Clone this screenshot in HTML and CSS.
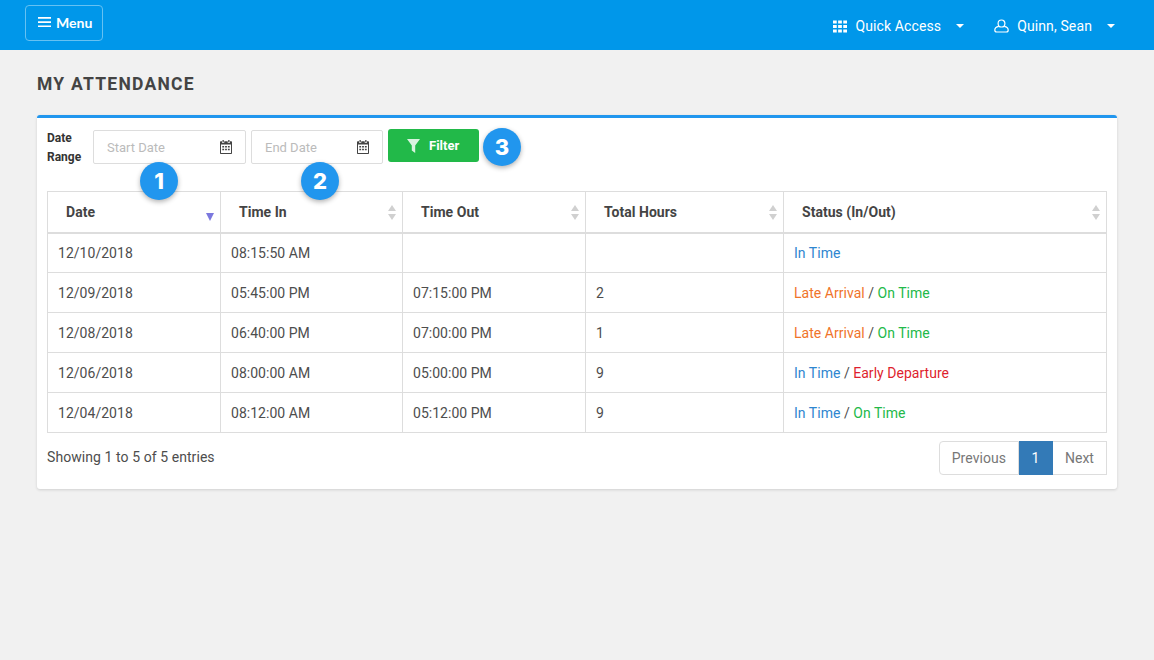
FILE: index.html
```html
<!doctype html>
<html>
  <head>
    <title>My Attendance</title>
    <meta name="viewport" content="width=device-width, initial-scale=1">
    <link rel="stylesheet" href="styles.css">
  </head>
  <body>
    <header class="navbar">
      <button class="menu-btn">
        <svg class="menu-icon" width="13" height="12" viewBox="0 0 13 12"><path d="M0 1h13v1.7H0zM0 5.200h13v1.700H0zM0 9.400h13v1.700H0z" fill="#fff"/></svg>
        Menu
      </button>
      <nav class="nav-right">
        <a class="nav-link nav-quick">
          <svg width="14" height="13" viewBox="0 0 15 13" fill="#fff"><path d="M0 0h4v3.400H0zM5.500 0h4v3.400h-4zM11 0h4v3.400h-4zM0 4.800h4v3.400H0zM5.500 4.800h4v3.400h-4zM11 4.800h4v3.400h-4zM0 9.600h4V13H0zM5.500 9.600h4V13h-4zM11 9.600h4V13h-4z"/></svg>
          <span>Quick Access</span>
          <i class="caret"></i>
        </a>
        <a class="nav-link nav-user">
          <svg width="15" height="14" viewBox="0 0 15 14" fill="none" stroke="#fff" stroke-width="1.2"><path d="M7.500 1c-2 0-3.400 1.500-3.400 3.400S5.500 8 7.500 8s3.400-1.700 3.400-3.600S9.500 1 7.500 1z"/><path d="M4.800 7.400C2.500 7.800.8 9 .8 11c0 1.200.7 2 1.900 2h9.600c1.200 0 1.900-.8 1.900-2 0-2-1.700-3.200-4-3.600"/></svg>
          <span>Quinn, Sean</span>
          <i class="caret"></i>
        </a>
      </nav>
    </header>

    <main class="content">
      <h1 class="page-title">MY ATTENDANCE</h1>

      <section class="card">
        <form class="filter-row">
          <label class="filter-label">Date<br>Range</label>
          <div class="date-input date-start">
            <span>Start Date</span>
            <svg class="cal-icon" width="12" height="14" viewBox="0 0 12 14"><path fill="#444" d="M2.500 0h1.300v2H2.500zM8.200 0h1.300v2H8.200zM1 1.300h1v1.500h2.300V1.300h3.400v1.500H10V1.300h1c.6 0 1 .4 1 1V13c0 .6-.4 1-1 1H1c-.6 0-1-.4-1-1V2.300c0-.6.4-1 1-1zM1 4.600V13h10V4.600z"/><path fill="#444" d="M2.300 6h1.800v1.500H2.300zM5.100 6h1.800v1.500H5.100zM7.900 6h1.800v1.500H7.900zM2.300 8.800h1.800v1.500H2.300zM5.100 8.800h1.800v1.500H5.100zM7.900 8.800h1.800v1.500H7.900z"/></svg>
          </div>
          <div class="date-input date-end">
            <span>End Date</span>
            <svg class="cal-icon" width="12" height="14" viewBox="0 0 12 14"><path fill="#444" d="M2.500 0h1.300v2H2.500zM8.200 0h1.300v2H8.200zM1 1.300h1v1.500h2.300V1.300h3.400v1.500H10V1.300h1c.6 0 1 .4 1 1V13c0 .6-.4 1-1 1H1c-.6 0-1-.4-1-1V2.300c0-.6.4-1 1-1zM1 4.600V13h10V4.600z"/><path fill="#444" d="M2.300 6h1.800v1.500H2.300zM5.100 6h1.800v1.500H5.100zM7.900 6h1.800v1.500H7.900zM2.300 8.800h1.800v1.500H2.300zM5.100 8.800h1.800v1.500H5.100zM7.900 8.800h1.800v1.500H7.900z"/></svg>
          </div>
          <button type="button" class="filter-btn">
            <svg width="13" height="14" viewBox="0 0 13 14"><path fill="#d8f3df" d="M0 0h13L8.200 6.500V14L4.800 11.500v-5z"/></svg>
            Filter
          </button>
        </form>

        <table class="data-table">
          <thead>
            <tr>
              <th class="col-date sorted">Date<i class="sort-desc"></i></th>
              <th class="col-in">Time In<i class="sort"></i></th>
              <th class="col-out">Time Out<i class="sort"></i></th>
              <th class="col-total">Total Hours<i class="sort"></i></th>
              <th class="col-status">Status (In/Out)<i class="sort"></i></th>
            </tr>
          </thead>
          <tbody>
            <tr><td>12/10/2018</td><td>08:15:50 AM</td><td></td><td></td><td><span class="blue">In Time</span></td></tr>
            <tr><td>12/09/2018</td><td>05:45:00 PM</td><td>07:15:00 PM</td><td>2</td><td><span class="orange">Late Arrival</span> / <span class="green">On Time</span></td></tr>
            <tr><td>12/08/2018</td><td>06:40:00 PM</td><td>07:00:00 PM</td><td>1</td><td><span class="orange">Late Arrival</span> / <span class="green">On Time</span></td></tr>
            <tr><td>12/06/2018</td><td>08:00:00 AM</td><td>05:00:00 PM</td><td>9</td><td><span class="blue">In Time</span> / <span class="red">Early Departure</span></td></tr>
            <tr><td>12/04/2018</td><td>08:12:00 AM</td><td>05:12:00 PM</td><td>9</td><td><span class="blue">In Time</span> / <span class="green">On Time</span></td></tr>
          </tbody>
        </table>

        <div class="table-footer">
          <div class="table-info">Showing 1 to 5 of 5 entries</div>
          <ul class="pagination">
            <li>Previous</li>
            <li class="active">1</li>
            <li>Next</li>
          </ul>
        </div>

        <span class="badge badge-1">1</span>
        <span class="badge badge-2">2</span>
        <span class="badge badge-3">3</span>
      </section>
    </main>
  </body>
</html>
```

FILE: styles.css
```css
* {
    box-sizing: border-box;
}
body {
    margin: 0;
    min-height: 660px;
    background: #f1f1f1;
    font-family: "Roboto", sans-serif;
    font-size: 14px;
    color: #4d4d4d;
}

/* top bar */
.navbar {
    display: flex;
    justify-content: space-between;
    height: 50px;
    padding: 5px 39px 0 25px;
    background: #0097ea;
}
.menu-btn {
    display: flex;
    align-items: center;
    gap: 5px;
    width: 78px;
    height: 36px;
    padding: 0 0 2px 12px;
    border: 1px solid #66c1f2;
    border-radius: 4px;
    background: transparent;
    color: #fff;
    font-family: "Lato", sans-serif;
    font-size: 14px;
    font-weight: 700;
}
.nav-right {
    display: flex;
    height: 40px;
    align-items: center;
    gap: 30px;
    padding-top: 2px;
}
.nav-link {
    display: flex;
    align-items: center;
    color: #fff;
    font-size: 14px;
    letter-spacing: 0.12px;
}
.nav-link svg {
    margin-right: 8px;
}
.caret {
    width: 0;
    height: 0;
    margin-left: 15px;
    border-left: 4.5px solid transparent;
    border-right: 4.5px solid transparent;
    border-top: 4.5px solid #fff;
}

.content {
    padding: 23px 37px 0;
}
.page-title {
    margin: 0 0 20px;
    font-size: 17.5px;
    line-height: 22px;
    font-weight: 700;
    letter-spacing: 1.25px;
    color: #444;
}

.card {
    position: relative;
    height: 374px;
    padding: 11px 10px 0;
    border-top: 3px solid #2196ee;
    border-radius: 3px;
    background: #fff;
    box-shadow: 0 1px 3px rgba(0, 0, 0, 0.14);
}

/* filter */
.filter-row {
    display: flex;
    align-items: flex-start;
    height: 62px;
}
.filter-label {
    width: 46px;
    font-size: 12px;
    font-weight: 700;
    line-height: 19px;
    color: #333;
}
.date-input {
    display: flex;
    align-items: center;
    justify-content: space-between;
    height: 34px;
    margin-top: 1px;
    padding: 0 13px;
    border: 1px solid #ddd;
    border-radius: 2px;
    color: #bbb;
    font-size: 13px;
}
.cal-icon {
    margin-top: -1px;
}
.date-start {
    width: 153px;
    margin-right: 5px;
}
.date-end {
    width: 132px;
    margin-right: 5px;
}
.filter-btn {
    display: flex;
    align-items: center;
    gap: 9px;
    width: 91px;
    height: 33px;
    padding: 0 0 0 19px;
    border: 0;
    border-radius: 3px;
    background: #22b949;
    color: #fff;
    font-family: "Roboto", sans-serif;
    font-size: 13px;
    font-weight: 700;
}

/* table */
.data-table {
    width: 1060px;
    border-collapse: collapse;
    table-layout: fixed;
    font-size: 14px;
    letter-spacing: 0.03px;
}
.data-table th,
.data-table td {
    border: 1px solid #ddd;
    text-align: left;
}
.data-table th {
    position: relative;
    height: 41px;
    padding: 0 0 0 18px;
    border-bottom-width: 2px;
    font-size: 14px;
    font-weight: 700;
    color: #444;
}
.data-table td {
    height: 40px;
    padding: 0 10px;
}
.col-date { width: 173px; }
.col-in { width: 182px; }
.col-out { width: 183px; }
.col-total { width: 198px; }
.sort,
.sort-desc {
    position: absolute;
    right: 5px;
    top: 13px;
    width: 9px;
    height: 15px;
}
.sort::before,
.sort::after {
    content: "";
    position: absolute;
    left: 0;
    border-left: 4.5px solid transparent;
    border-right: 4.5px solid transparent;
}
.sort::before {
    top: 0;
    border-bottom: 6.5px solid #d0d0d0;
}
.sort::after {
    bottom: 0;
    border-top: 6.5px solid #d0d0d0;
}
.sort-desc::after {
    content: "";
    position: absolute;
    left: 0;
    bottom: -1px;
    border-left: 4.5px solid transparent;
    border-right: 4.5px solid transparent;
    border-top: 8px solid #7b78de;
}
.blue { color: #2e86d0; }
.orange { color: #f0742a; }
.green { color: #22b949; }
.red { color: #de1f2e; }

/* footer */
.table-footer {
    display: flex;
    justify-content: space-between;
    margin-top: 8px;
}
.table-info {
    padding-top: 8px;
    font-size: 14px;
    letter-spacing: 0.07px;
}
.pagination {
    display: flex;
    height: 34px;
    margin: 0;
    padding: 0;
    list-style: none;
    color: #777;
    font-size: 14px;
    letter-spacing: 0.04px;
}
.pagination li {
    display: flex;
    align-items: center;
    padding: 0 12px;
    border: 1px solid #ddd;
    border-left: 0;
}
.pagination li:first-child {
    border-left: 1px solid #ddd;
    border-radius: 4px 0 0 4px;
}
.pagination li.active {
    padding: 0 12.5px;
    background: #337ab7;
    border-color: #337ab7;
    color: #fff;
}

/* numbered callouts */
.badge {
    position: absolute;
    display: flex;
    align-items: center;
    justify-content: center;
    width: 38px;
    height: 38px;
    border-radius: 50%;
    background: #2196ee;
    box-shadow: 0 2px 5px rgba(0, 0, 0, 0.3);
    color: #fff;
    font-family: "Inter", sans-serif;
    font-size: 22px;
    font-weight: 800;
}
.badge-1 { left: 103px; top: 44px; }
.badge-2 { left: 264px; top: 44px; }
.badge-3 { left: 446px; top: 10px; }
```
